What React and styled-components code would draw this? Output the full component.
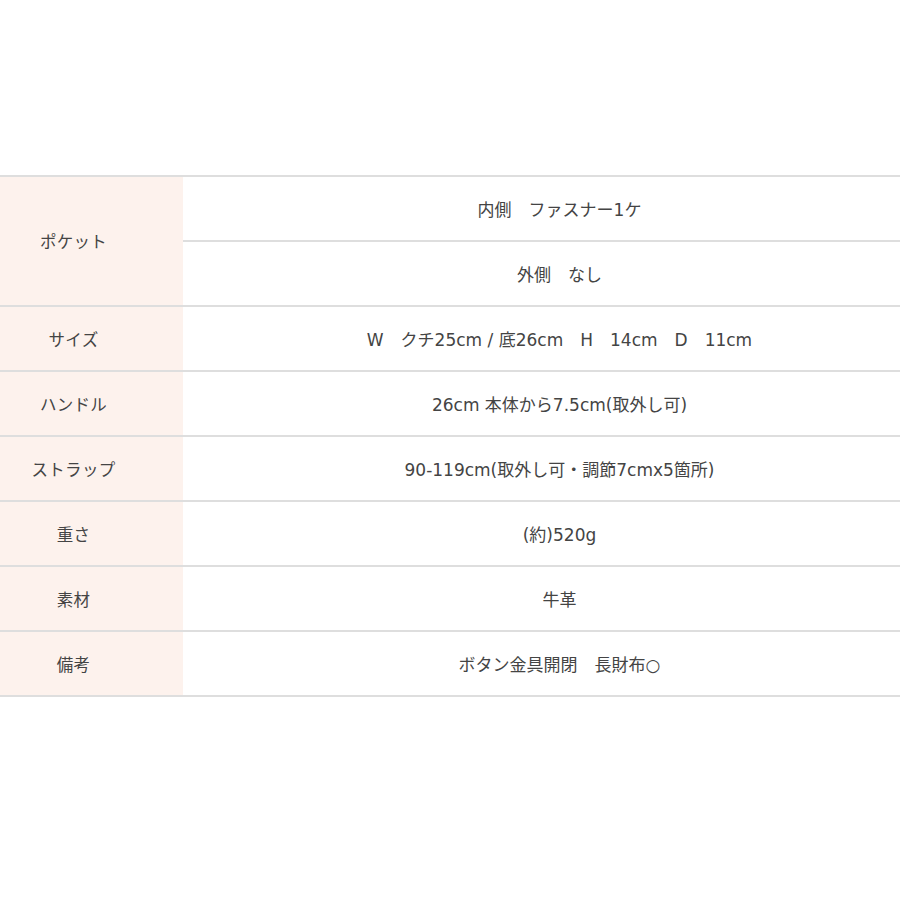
import React from 'react';
import styled, { createGlobalStyle } from 'styled-components';

const GlobalStyle = createGlobalStyle`
  html, body {
    margin: 0;
    padding: 0;
    background: #ffffff;
  }
  body {
    font-family: "DejaVu Sans", "Noto Sans CJK JP", sans-serif;
    color: #444444;
  }
`;

const Page = styled.div`
  padding-top: 175px;
  width: 900px;
`;

const Table = styled.table`
  width: 100%;
  border-collapse: collapse;
  table-layout: fixed;
  border-bottom: 2px solid #dedede;
`;

const Label = styled.th`
  width: 183px;
  box-sizing: border-box;
  height: 65px;
  padding: 0 36px 0 0;
  background: #fdf2ed;
  border-top: 2px solid #dedede;
  font-weight: normal;
  font-size: 16.5px;
  letter-spacing: 0.3px;
  text-align: center;
  vertical-align: middle;
`;

const Value = styled.td`
  height: 65px;
  box-sizing: border-box;
  padding: 0 0 0 36px;
  border-top: 2px solid #dedede;
  font-size: 17px;
  text-align: center;
  vertical-align: middle;
  white-space: pre;
`;

const rows = [
  { label: 'ポケット', values: ['内側　ファスナー1ケ', '外側　なし'] },
  { label: 'サイズ', values: ['W　クチ25cm / 底26cm　H　14cm　D　11cm'] },
  { label: 'ハンドル', values: ['26cm 本体から7.5cm(取外し可)'] },
  { label: 'ストラップ', values: ['90-119cm(取外し可・調節7cmx5箇所)'] },
  { label: '重さ', values: ['(約)520g'] },
  { label: '素材', values: ['牛革'] },
  { label: '備考', values: ['ボタン金具開閉　長財布○'] },
];

export default function App() {
  return (
    <>
      <GlobalStyle />
      <Page>
        <Table>
          <tbody>
            {rows.map((row) =>
              row.values.map((value, i) => (
                <tr key={row.label + i}>
                  {i === 0 && <Label rowSpan={row.values.length}>{row.label}</Label>}
                  <Value>{value}</Value>
                </tr>
              ))
            )}
          </tbody>
        </Table>
      </Page>
    </>
  );
}
